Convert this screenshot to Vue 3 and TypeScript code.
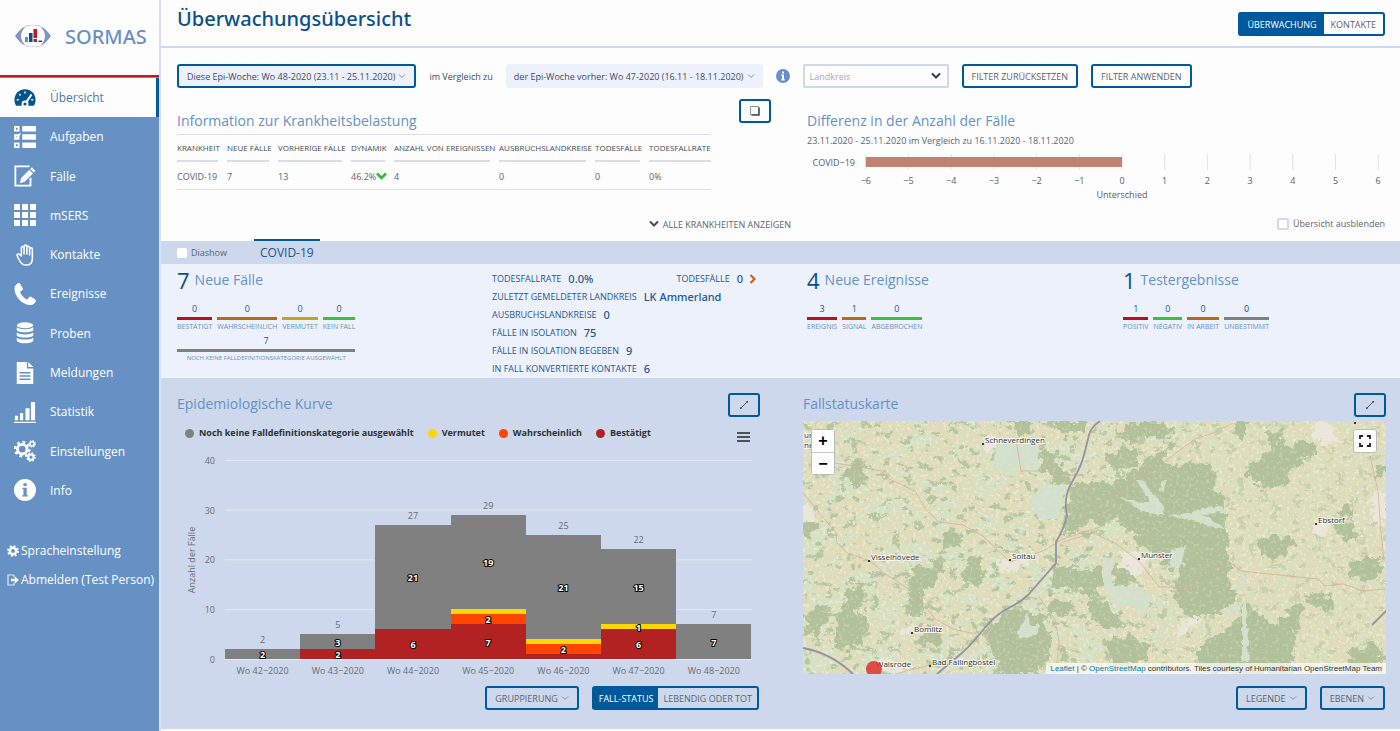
<script setup lang="ts">
import { ref } from 'vue'

interface NavItem { label: string; icon: string }
interface Count { value: number; label: string; tone: string; wide?: boolean }
interface Week { name: string; red: number; orange: number; yellow: number; grey: number }
interface Segment { key: string; x: number; y: number; h: number; fill: string; text: string }
interface Place { name: string; x: number; y: number }

const navItems: NavItem[] = [
  { label: 'Übersicht', icon: 'gauge' },
  { label: 'Aufgaben', icon: 'tasks' },
  { label: 'Fälle', icon: 'edit' },
  { label: 'mSERS', icon: 'grid' },
  { label: 'Kontakte', icon: 'hand' },
  { label: 'Ereignisse', icon: 'phone' },
  { label: 'Proben', icon: 'database' },
  { label: 'Meldungen', icon: 'file' },
  { label: 'Statistik', icon: 'bars' },
  { label: 'Einstellungen', icon: 'cogs' },
  { label: 'Info', icon: 'info' },
]
const active = ref('Übersicht')
const slideshow = ref(false)
const hideOverview = ref(false)

const columns = ['Krankheit', 'Neue Fälle', 'Vorherige Fälle', 'Dynamik', 'Anzahl von Ereignissen', 'Ausbruchslandkreise', 'Todesfälle', 'Todesfallrate']

const caseCounts: Count[] = [
  { value: 0, label: 'Bestätigt', tone: 'red' },
  { value: 0, label: 'Wahrscheinlich', tone: 'orange' },
  { value: 0, label: 'Vermutet', tone: 'gold' },
  { value: 0, label: 'Kein Fall', tone: 'green' },
  { value: 7, label: 'Noch keine Falldefinitionskategorie ausgewählt', tone: 'grey', wide: true },
]
const eventCounts: Count[] = [
  { value: 3, label: 'Ereignis', tone: 'red' },
  { value: 1, label: 'Signal', tone: 'orange' },
  { value: 0, label: 'Abgebrochen', tone: 'green' },
]
const testCounts: Count[] = [
  { value: 1, label: 'Positiv', tone: 'red' },
  { value: 0, label: 'Negativ', tone: 'green' },
  { value: 0, label: 'In Arbeit', tone: 'orange' },
  { value: 0, label: 'Unbestimmt', tone: 'grey' },
]
const details = [
  { label: 'Zuletzt gemeldeter Landkreis', value: 'LK Ammerland' },
  { label: 'Ausbruchslandkreise', value: '0' },
  { label: 'Fälle in Isolation', value: '75' },
  { label: 'Fälle in Isolation begeben', value: '9' },
  { label: 'In Fall konvertierte Kontakte', value: '6' },
]

const diffTicks = [-6, -5, -4, -3, -2, -1, 0, 1, 2, 3, 4, 5, 6]
const diffX = (v: number) => 315 + v * 42.7
const diffLabel = (v: number) => (v < 0 ? '−' + Math.abs(v) : String(v))

const legend = [
  { label: 'Noch keine Falldefinitionskategorie ausgewählt', tone: 'grey' },
  { label: 'Vermutet', tone: 'yellow' },
  { label: 'Wahrscheinlich', tone: 'vermilion' },
  { label: 'Bestätigt', tone: 'brick' },
]
const weeks: Week[] = [
  { name: 'Wo 42−2020', red: 0, orange: 0, yellow: 0, grey: 2 },
  { name: 'Wo 43−2020', red: 2, orange: 0, yellow: 0, grey: 3 },
  { name: 'Wo 44−2020', red: 6, orange: 0, yellow: 0, grey: 21 },
  { name: 'Wo 45−2020', red: 7, orange: 2, yellow: 1, grey: 19 },
  { name: 'Wo 46−2020', red: 1, orange: 2, yellow: 1, grey: 21 },
  { name: 'Wo 47−2020', red: 6, orange: 0, yellow: 1, grey: 15 },
  { name: 'Wo 48−2020', red: 0, orange: 0, yellow: 0, grey: 7 },
]
const unit = 4.98
const base = 214
const barWidth = 75.2
const barX = (i: number) => 48 + i * barWidth
const total = (w: Week) => w.red + w.orange + w.yellow + w.grey
const segments: Segment[] = weeks.flatMap((w, i) => {
  let sum = 0
  const parts: [number, string][] = [[w.red, '#b22222'], [w.orange, '#ff4500'], [w.yellow, '#ffd700'], [w.grey, '#808080']]
  return parts.filter(([n]) => n > 0).map(([n, fill]) => {
    sum += n
    const visible = n > 1 || (n === 1 && w.orange === 0)
    return { key: w.name + fill, x: barX(i), y: base - sum * unit, h: n * unit, fill, text: visible ? String(n) : '' }
  })
})

const places: Place[] = [
  { name: 'Schneverdingen', x: 180, y: 23 },
  { name: 'Visselhövede', x: 66, y: 140 },
  { name: 'Soltau', x: 207, y: 139 },
  { name: 'Munster', x: 336, y: 138 },
  { name: 'Ebstorf', x: 513, y: 103 },
  { name: 'Bomlitz', x: 109, y: 212 },
  { name: 'Bad Fallingbostel', x: 127, y: 245 },
]
const forests = [
  '268,66 290,60 306,62 322,56 345,38 368,22 362,45 392,42 414,50 410,62 418,72 420,88 422,105 427,118 424,130 400,136 378,142 366,152 356,140 345,130 330,118 322,105 310,96 300,104 290,100 262,112 255,118 264,94',
  '310,14 322,5 355,0 372,12 360,20 345,12 325,22',
  '300,38 318,26 340,28 334,42 312,50',
  '430,2 444,0 446,14 434,16',
  '462,8 480,12 475,25 510,22 516,30 498,42 488,48 486,60 462,68 445,55 448,42 462,34 468,22',
  '384,134 424,126 428,150 425,160 434,175 418,192 395,196 378,188 366,170 372,166',
  '396,228 412,214 436,196 440,182 455,195 470,205 490,184 500,182 486,253 396,253',
  '376,176 392,180 396,196 380,196',
  '527,104 550,98 552,120 538,116',
  '547,141 570,134 582,144 577,157 560,161 547,152',
  '545,230 570,222 582,235 570,245 548,248',
  '454,120 480,114 494,120 487,134 460,137',
  '505,172 530,175 525,190 508,188',
  '532,90 540,84 552,88 548,98',
  '220,186 240,196 247,210 244,240 230,253 200,253 187,231 180,211 200,192',
  '253,144 275,150 300,146 300,160 292,175 275,170 260,165 245,168',
  '247,174 270,182 264,196 244,190',
  '310,142 335,150 334,164 314,165',
  '288,176 306,184 320,200 304,206 284,196',
  '302,222 325,214 350,226 340,240 312,246',
  '44,170 60,161 64,180 52,190 66,205 60,224 30,228 34,197',
  '4,190 22,184 28,200 14,212 0,214',
  '110,151 134,138 144,150 134,160 120,172 120,194 104,191 106,170',
  '150,108 162,112 156,124 140,130 134,120',
  '166,136 180,140 184,152 170,166 160,156',
  '238,24 252,34 270,57 262,62 237,50',
  '247,0 287,0 277,11 258,14',
  '205,0 226,0 228,10 216,14',
  '45,42 58,38 66,60 50,66 42,56',
  '0,100 17,104 7,117 0,114',
  '118,206 138,208 134,226 116,222',
  '572,46 583,46 583,56 572,56',
]
const heaths = [
  '194,18 237,20 234,48 190,50',
  '240,64 260,64 258,98 237,98 227,78',
  '300,134 314,140 306,150 310,164 340,167 347,177 342,197 330,184 313,184 300,164',
  '334,59 339,59 362,87 360,94 343,92 317,77 337,81 347,81',
  '358,60 363,60 362,72 357,70',
  '397,87 419,85 420,92 400,93 424,109 410,107 394,101 364,94 387,92',
  '439,182 443,182 446,241 439,241',
  '437,148 442,148 441,168 437,166',
  '418,190 438,182 438,188 420,194',
  '225,191 227,204 239,204 234,214 217,217 214,211',
  '368,128 382,126 378,145 366,148',
]
const towns = ['180,16 190,14 196,28 184,34', '192,142 222,132 230,140 214,150 196,150', '318,132 340,128 344,148 332,154 318,144', '508,102 520,98 526,110 512,114', '96,206 112,204 114,212 98,214', '74,238 104,242 112,250 78,250', '511,0 526,4 536,20 520,24 510,16', '567,78 582,66 582,104 572,100', '0,82 8,86 16,98 6,104 0,100', '378,200 400,194 392,206 374,216']
const roads = [
  'M0 72 15 90 33 112 34 122 45 132 67 140 84 154 104 167 120 182 132 198 150 208 168 212 185 212',
  'M31 42 58 46 78 50 86 58 112 70 124 90 136 101 160 104 180 115 207 141 240 130 260 118 300 105',
  'M213 18 218 50 240 50 265 54 282 54',
  'M287 90 330 60 362 40 392 18 410 12 430 2',
  'M257 122 290 112 312 122 336 140 356 166 388 166 410 148 425 140 438 150 515 158 522 165 540 163 560 170 582 168',
  'M567 35 575 70 578 110 581 140',
  'M236 176 252 198 256 220 254 242',
  'M92 253 120 246 150 236',
]
</script>

<template>
  <div class="app">
    <aside class="sidebar">
      <div class="brand">
        <svg class="logo" viewBox="0 0 36 22" aria-hidden="true">
          <path d="M11 1C6 3 3 7 0 11c3 4 6 8 11 10-3-3-5-6-5-10s2-7 5-10zM25 1c5 2 8 6 11 10-3 4-6 8-11 10 3-3 5-6 5-10s-2-7-5-10z" fill="#7f97c6" />
          <path d="M11 1c4-1.300 10-1.300 14 0M11 21c4 1.300 10 1.300 14 0" fill="none" stroke="#c3cee4" stroke-width="1.200" />
          <path d="M10 12h3v5h-3z" fill="#6f8cc0" /><path d="M14 8h3.500v9H14z" fill="#0a4f8c" />
          <path d="M18.500 4h3.500v9h-3.500zM18.500 14h3.500v3h-3.500z" fill="#c4161c" />
          <path d="M23.500 15.500H27V17h-3.500z" fill="#0a4f8c" />
        </svg>
        <span>SORMAS</span>
      </div>
      <nav class="nav">
        <a v-for="item in navItems" :key="item.label" href="#" :class="{ selected: item.label === active }" @click.prevent="active = item.label">
          <svg class="nav-icon" viewBox="0 0 24 24" fill="currentColor" aria-hidden="true">
            <template v-if="item.icon === 'gauge'">
              <path d="M12 2.500C5.500 2.500.5 7.500.5 14c0 2.500.7 4.800 1.900 6.500h19.200c1.200-1.700 1.900-4 1.900-6.500 0-6.500-5-11.500-11.500-11.500z" />
              <path d="m12.500 18 6-9" stroke="#fff" stroke-width="2.400" stroke-linecap="round" />
              <circle cx="12" cy="18.500" r="3.800" fill="#fff" /><circle cx="12" cy="18.500" r="1.700" />
              <path d="M12 4.800v2.200M3 14h2.200M18.800 14H21M5.700 7.700l1.500 1.500" stroke="#fff" stroke-width="1.600" />
            </template>
            <template v-else-if="item.icon === 'tasks'">
              <path fill-rule="evenodd" d="M0 0h6v6H0zM2 2v2h2V2zM0 9h6v6H0zM2 11v2h2v-2zM0 18h6v6H0zM2 20v2h2v-2z" />
              <path d="M9 0h15v6H9zM9 9h15v6H9zM9 18h15v6H9z" /><path d="m1 11 2 2 4-5" fill="none" stroke="#fff" stroke-width="1.500" />
            </template>
            <template v-else-if="item.icon === 'edit'">
              <path d="M17 1.500H1.500v21H18V14" fill="none" stroke="currentColor" stroke-width="2" />
              <path d="m19.500 2.500 4 4-1.800 1.800-4-4zM16.700 5.300l4 4-9 9-5.200 1.500 1.300-5.500z" />
            </template>
            <path v-else-if="item.icon === 'grid'" d="M0 0h6.500v6.500H0zM8.800 0h6.500v6.500H8.800zM17.500 0H24v6.500h-6.500zM0 8.800h6.500v6.500H0zM8.800 8.800h6.500v6.500H8.800zM17.500 8.800H24v6.500h-6.500zM0 17.500h6.500V24H0zM8.800 17.500h6.500V24H8.800zM17.500 17.500H24V24h-6.500z" />
            <path v-else-if="item.icon === 'hand'" fill="none" stroke="currentColor" stroke-width="1.700" stroke-linejoin="round" stroke-linecap="round" d="M8 13V4.200c0-2 3-2 3 0V11 2.600c0-2 3-2 3 0V11 4c0-2 3-2 3 0v8-6.500c0-2 3-2 3 0V16c0 4-2 7-7 7-4 0-5.500-2-7-5l-2.600-5.200c-.6-1.800 1.600-2.600 2.600-1.300z" />
            <path v-else-if="item.icon === 'phone'" d="M5 0C3 .8.500 3 .5 6c0 9 8.500 18 17.500 18 3 0 5.200-2.500 5.800-4.500.2-.7 0-1-.5-1.400L18.500 15c-.7-.5-1.300-.3-1.800.3l-1.800 2.200c-.4.5-1 .5-1.500.2-2.800-1.700-5-4-6.500-7-.3-.5-.2-1 .3-1.400L9.300 7.500c.6-.5.700-1 .3-1.700L6.500.6C6.100 0 5.700-.2 5 0z" />
            <g v-else-if="item.icon === 'database'">
              <ellipse cx="12" cy="3.500" rx="9" ry="3.200" /><path d="M3 5.800c3 2.700 15 2.700 18 0V9c-2 3-16 3-18 0zM3 11.500c3 2.700 15 2.700 18 0v3.200c-2 3-16 3-18 0zM3 17.200c3 2.700 15 2.700 18 0v3.300c-2 3.700-16 3.700-18 0z" />
            </g>
            <path v-else-if="item.icon === 'file'" fill-rule="evenodd" d="M3 0h11v7h7v17H3zM15.500 0 21 5.500h-5.500zM6 11v1.500h12V11zM6 14.500V16h12v-1.500zM6 18v1.500h12V18z" />
            <path v-else-if="item.icon === 'bars'" d="M1 16h3.500v5H1zM6.500 13H10v8H6.500zM12.500 8H17v13h-4.500zM18.500 1H23v20h-4.500zM0 22.500h24V24H0z" />
            <g v-else-if="item.icon === 'cogs'" fill="none" stroke="currentColor">
              <circle cx="9" cy="10" r="5.200" stroke-width="3.200" /><circle cx="9" cy="10" r="7.800" stroke-width="2.600" stroke-dasharray="3.060" />
              <circle cx="19.800" cy="4.200" r="2.300" stroke-width="1.800" /><circle cx="19.800" cy="4.200" r="3.500" stroke-width="1.200" stroke-dasharray="1.370" />
              <circle cx="18.500" cy="18.700" r="2.900" stroke-width="2.200" /><circle cx="18.500" cy="18.700" r="4.500" stroke-width="1.600" stroke-dasharray="1.770" />
            </g>
            <path v-else fill-rule="evenodd" d="M12 0a12 12 0 1 1 0 24 12 12 0 0 1 0-24zM10.300 4.500v3h3.600v-3zM9 9.500v1.300h1.300v7H9V19h6.300v-1.200h-1.400V9.500z" />
          </svg>
          <span>{{ item.label }}</span>
        </a>
      </nav>
      <div class="account">
        <a href="#">
          <svg viewBox="0 0 12 12" aria-hidden="true"><g fill="none" stroke="#fff"><circle cx="6" cy="6" r="3.200" stroke-width="2.400" /><circle cx="6" cy="6" r="5" stroke-width="1.800" stroke-dasharray="1.960" /></g></svg>
          Spracheinstellung
        </a>
        <a href="#">
          <svg viewBox="0 0 12 12" aria-hidden="true"><path d="M7 1H1v10h6V8.500M7 1v2.500" fill="none" stroke="#dfe9f6" stroke-width="1.200" /><path d="M4 4.800h4V2.500L12 6 8 9.500V7.200H4z" fill="#fff" /></svg>
          Abmelden (Test Person)
        </a>
      </div>
    </aside>

    <main class="main">
      <header class="header">
        <h1>Überwachungsübersicht</h1>
        <div class="switch roomy">
          <button class="on" type="button">Überwachung</button><button type="button">Kontakte</button>
        </div>
      </header>

      <section class="overview">
        <div class="filters">
          <button class="btn week framed" type="button">Diese Epi-Woche: Wo 48-2020 (23.11 - 25.11.2020)<svg class="caret" viewBox="0 0 8 8"><path d="m1 2.500 3 3 3-3" /></svg></button>
          <span class="compare">im Vergleich zu</span>
          <button class="btn week" type="button">der Epi-Woche vorher: Wo 47-2020 (16.11 - 18.11.2020)<svg class="caret" viewBox="0 0 8 8"><path d="m1 2.500 3 3 3-3" /></svg></button>
          <svg class="hint" viewBox="0 0 14 14" aria-label="Info"><circle cx="7" cy="7" r="7" fill="#6691c4" /><path d="M6 2.500h2v2H6zM5.200 5.500H8v4.700h.8v1.200H5.200v-1.200H6V6.700h-.8z" fill="#fff" /></svg>
          <div class="region">
            <select aria-label="Landkreis"><option>Landkreis</option></select>
            <svg viewBox="0 0 10 8" aria-hidden="true"><path d="m1 1.500 4 4 4-4" /></svg>
          </div>
          <button class="btn framed" type="button">Filter zurücksetzen</button>
          <button class="btn framed" type="button">Filter anwenden</button>
        </div>

        <div class="burden">
          <div class="burden-left">
            <div class="burden-head">
              <h2>Information zur Krankheitsbelastung</h2>
              <button class="btn framed square" type="button" aria-label="Kachelansicht"><svg viewBox="0 0 10 10" aria-hidden="true"><path d="M.5.500h8v8h-8z" fill="#fff" stroke="#8a93a3" /><path d="M9 1.500V9H1.500" fill="none" stroke="#464f5e" stroke-width="1.600" /></svg></button>
            </div>
            <table>
              <colgroup><col v-for="(c, i) in columns" :key="c" :class="'c' + i" /></colgroup>
              <thead><tr><th v-for="c in columns" :key="c" scope="col"><span>{{ c }}</span></th></tr></thead>
              <tbody>
                <tr>
                  <td>COVID-19</td><td>7</td><td>13</td>
                  <td class="dyn">46.2%<svg viewBox="0 0 11 8" aria-hidden="true"><path d="m1 1.500 4.500 4.500L10 1.500" fill="none" stroke="#2fbf36" stroke-width="2.600" /></svg></td>
                  <td>4</td><td>0</td><td>0</td><td>0%</td>
                </tr>
              </tbody>
            </table>
            <button class="plain show-all" type="button"><svg viewBox="0 0 10 8" aria-hidden="true"><path d="m1 1.500 4 4 4-4" /></svg>Alle Krankheiten anzeigen</button>
          </div>
          <div class="burden-right">
            <h2>Differenz in der Anzahl der Fälle</h2>
            <p>23.11.2020 - 25.11.2020 im Vergleich zu 16.11.2020 - 18.11.2020</p>
            <svg class="diff" viewBox="0 0 578 52" role="img" aria-label="Differenz in der Anzahl der Fälle">
              <path v-for="t in diffTicks" :key="t" :d="`M${diffX(t)} 2v16`" stroke="#e2e2e2" />
              <rect :x="diffX(-6)" y="5" :width="diffX(0) - diffX(-6)" height="10" fill="#c08272" />
              <text x="48" y="14" text-anchor="end">COVID−19</text>
              <text v-for="t in diffTicks" :key="'l' + t" :x="diffX(t)" y="32" text-anchor="middle">{{ diffLabel(t) }}</text>
              <text :x="diffX(0)" y="46" text-anchor="middle">Unterschied</text>
            </svg>
            <label class="hide"><input v-model="hideOverview" type="checkbox" />Übersicht ausblenden</label>
          </div>
        </div>
      </section>

      <div class="tabs">
        <label><input v-model="slideshow" type="checkbox" />Diashow</label>
        <button class="tab" type="button">COVID-19</button>
      </div>

      <section class="stats">
        <div>
          <h3><b>7</b>Neue Fälle</h3>
          <div class="counts four">
            <div v-for="c in caseCounts" :key="c.label" class="count" :class="[c.tone, { wide: c.wide }]"><span>{{ c.value }}</span><i></i><small>{{ c.label }}</small></div>
          </div>
        </div>
        <div class="details">
          <div class="pair"><div><span>Todesfallrate</span><b>0.0%</b></div><div><span>Todesfälle</span><b>0</b><svg viewBox="0 0 8 10" aria-hidden="true"><path d="m1.500 1 4 4-4 4" fill="none" stroke="#c0661a" stroke-width="2.200" /></svg></div></div>
          <div v-for="d in details" :key="d.label"><span>{{ d.label }}</span><b>{{ d.value }}</b></div>
        </div>
        <div>
          <h3><b>4</b>Neue Ereignisse</h3>
          <div class="counts">
            <div v-for="c in eventCounts" :key="c.label" class="count" :class="c.tone"><span>{{ c.value }}</span><i></i><small>{{ c.label }}</small></div>
          </div>
        </div>
        <div>
          <h3><b>1</b>Testergebnisse</h3>
          <div class="counts">
            <div v-for="c in testCounts" :key="c.label" class="count" :class="c.tone"><span>{{ c.value }}</span><i></i><small>{{ c.label }}</small></div>
          </div>
        </div>
      </section>

      <section class="panels">
        <div class="panel">
          <div class="panel-head">
            <h2>Epidemiologische Kurve</h2>
            <button class="btn framed clear square" type="button" aria-label="Vergrößern"><svg viewBox="0 0 10 10" aria-hidden="true"><path d="m2 8 6-6" stroke="#4a5260" /><path d="M1 9V6.800L3.200 9zM9 1v2.200L6.800 1z" fill="#4a5260" /></svg></button>
          </div>
          <div class="legend">
            <span v-for="l in legend" :key="l.label" :class="l.tone"><i></i>{{ l.label }}</span>
            <button class="plain menu" type="button" aria-label="Menü"><i></i><i></i><i></i></button>
          </div>
          <svg class="curve" viewBox="0 0 583 238" role="img" aria-label="Epidemiologische Kurve">
            <g v-for="t in [0, 10, 20, 30, 40]" :key="t">
              <path :d="`M48 ${base - t * unit + 0.5}H575`" stroke="#e6e9ee" />
              <text x="38" :y="base - t * unit + 4" text-anchor="end">{{ t }}</text>
            </g>
            <text transform="translate(18 115) rotate(-90)" text-anchor="middle">Anzahl der Fälle</text>
            <rect v-for="s in segments" :key="s.key" :x="s.x" :y="s.y" :width="barWidth" :height="s.h" :fill="s.fill" shape-rendering="crispEdges" />
            <text v-for="s in segments" :key="'t' + s.key" class="inner" :x="s.x + barWidth / 2" :y="s.y + s.h / 2 + 4" text-anchor="middle">{{ s.text }}</text>
            <g v-for="(w, i) in weeks" :key="w.name">
              <text :x="barX(i) + barWidth / 2" :y="base - total(w) * unit - 6" text-anchor="middle">{{ total(w) }}</text>
              <text :x="barX(i) + barWidth / 2" y="229" text-anchor="middle">{{ w.name }}</text>
            </g>
          </svg>
          <div class="actions left">
            <button class="btn framed clear" type="button">Gruppierung<svg class="caret" viewBox="0 0 8 8"><path d="m1 2.500 3 3 3-3" /></svg></button>
            <div class="switch clear"><button class="on" type="button">Fall-Status</button><button type="button">Lebendig oder tot</button></div>
          </div>
        </div>

        <div class="panel">
          <div class="panel-head">
            <h2>Fallstatuskarte</h2>
            <button class="btn framed clear square" type="button" aria-label="Vergrößern"><svg viewBox="0 0 10 10" aria-hidden="true"><path d="m2 8 6-6" stroke="#4a5260" /><path d="M1 9V6.800L3.200 9zM9 1v2.200L6.800 1z" fill="#4a5260" /></svg></button>
          </div>
          <div class="map">
            <svg viewBox="0 0 583 253" preserveAspectRatio="xMidYMid slice" role="img" aria-label="Karte">
              <defs>
                <filter id="rough" x="-5%" y="-5%" width="110%" height="110%"><feTurbulence type="fractalNoise" baseFrequency="0.12" numOctaves="4" seed="4" /><feDisplacementMap in="SourceGraphic" scale="18" xChannelSelector="R" yChannelSelector="G" /></filter>
                <filter id="edge" x="-5%" y="-5%" width="110%" height="110%"><feTurbulence type="fractalNoise" baseFrequency="0.15" numOctaves="2" seed="9" /><feDisplacementMap in="SourceGraphic" scale="6" xChannelSelector="R" yChannelSelector="G" /></filter>
                <filter id="woods" x="0" y="0" width="100%" height="100%" color-interpolation-filters="sRGB"><feTurbulence type="fractalNoise" baseFrequency="0.09 0.12" numOctaves="4" seed="12" /><feColorMatrix values="0 0 0 0 .71  0 0 0 0 .78  0 0 0 0 .63  12 0 0 0 -7.100" /></filter>
                <filter id="meadow" x="0" y="0" width="100%" height="100%" color-interpolation-filters="sRGB"><feTurbulence type="fractalNoise" baseFrequency="0.04" numOctaves="6" seed="31" /><feColorMatrix values="0 0 0 0 .84  0 0 0 0 .88  0 0 0 0 .76  0 7 0 0 -3.300" /></filter>
                <filter id="specks" x="0" y="0" width="100%" height="100%" color-interpolation-filters="sRGB"><feTurbulence type="fractalNoise" baseFrequency="0.3" numOctaves="3" seed="7" /><feColorMatrix values="0 0 0 0 .93  0 0 0 0 .92  0 0 0 0 .85  0 0 9 0 -5.200" /></filter>
                <linearGradient id="fade"><stop offset="0" stop-color="#fff" /><stop offset="0.5" stop-color="#fff" /><stop offset="0.75" stop-color="#888" /><stop offset="1" stop-color="#888" /></linearGradient>
                <mask id="west"><rect width="583" height="253" fill="url(#fade)" /></mask>
              </defs>
              <rect width="583" height="253" fill="#dfdcb9" />
              <g mask="url(#west)">
                <rect width="583" height="253" filter="url(#meadow)" />
                <rect width="583" height="253" filter="url(#woods)" />
              </g>
              <rect width="583" height="253" filter="url(#specks)" opacity=".7" />
              <g fill="#b1c29b" filter="url(#rough)"><polygon v-for="p in forests" :key="p" :points="p" /></g>
              <g fill="#ebe6da" filter="url(#rough)"><polygon v-for="p in towns" :key="p" :points="p" /></g>
              <g fill="#d3e0cb" filter="url(#edge)"><polygon v-for="p in heaths" :key="p" :points="p" /></g>
              <rect width="583" height="253" filter="url(#specks)" opacity=".25" />
              <path v-for="r in roads" :key="r" :d="r" fill="none" stroke="#dda794" stroke-linejoin="round" opacity=".7" />
              <g fill="none" stroke="#9493a6" stroke-width="1.800">
                <path d="M297 0Q288 6 286 14T281 34 269 61 264 94Q262 106 253 121V142L225 174Q216 182 204 188T180 209 160 231 134 253" />
                <path d="M0 227Q28 232 50 253M583 190 569 204" />
              </g>
              <g class="places">
                <text x="1" y="17">ur</text><text x="1" y="27">ne</text>
                <text x="73" y="246">Walsrode</text>
                <g v-for="p in places" :key="p.name"><circle :cx="p.x" :cy="p.y" r="1" /><text :x="p.x + 2" :y="p.y - 1">{{ p.name }}</text></g>
                <circle cx="552" cy="2" r="1" />
              </g>
              <circle cx="71" cy="248" r="8" fill="#e0332c" opacity=".85" />
            </svg>
            <div class="zoom"><button type="button" aria-label="Vergrößern">+</button><button type="button" aria-label="Verkleinern">−</button></div>
            <button class="full" type="button" aria-label="Vollbild"><svg viewBox="0 0 12 12"><path d="M1 4V1h3M8 1h3v3M11 8v3H8M4 11H1V8" fill="none" stroke="#222" stroke-width="1.800" /></svg></button>
            <div class="credit"><a href="#">Leaflet</a> | © <a href="#">OpenStreetMap</a> contributors. Tiles courtesy of Humanitarian OpenStreetMap Team</div>
          </div>
          <div class="actions">
            <button class="btn framed clear" type="button">Legende<svg class="caret" viewBox="0 0 8 8"><path d="m1 2.500 3 3 3-3" /></svg></button>
            <button class="btn framed clear" type="button">Ebenen<svg class="caret" viewBox="0 0 8 8"><path d="m1 2.500 3 3 3-3" /></svg></button>
          </div>
        </div>
      </section>
    </main>
  </div>
</template>

<style>
body { margin: 0; background: #fdfdfe; }
</style>

<style scoped>
* { box-sizing: border-box; }
.app { display: flex; min-height: 100vh; font-family: "Open Sans", "Noto Sans", sans-serif; font-size: 9px; color: #5c6470; background: #fdfdfe; }
button, select, input { font: inherit; color: inherit; margin: 0; }
button { cursor: pointer; }
h1, h2, h3, p { margin: 0; font-weight: 400; }
a { color: inherit; text-decoration: none; }
svg { display: block; flex: none; }

.sidebar { flex: none; width: 161px; background: #6691c4; border-right: 2px solid #d7e0f3; color: #fff; }
.brand { display: flex; align-items: center; gap: 14px; height: 77px; padding: 0 0 3px 15px; background: #fdfdfe; border-bottom: 2px solid #c01a1f; color: #6b8fc2; font-family: "Noto Sans", sans-serif; font-size: 20px; font-weight: 500; }
.logo { width: 36px; height: 22px; }
.nav { display: grid; grid-auto-rows: 1fr; min-height: 433px; padding-top: 1px; }
.nav a { display: flex; align-items: center; gap: 14px; padding-left: 14px; font-size: 12px; }
.nav a.selected { background: #fdfdfe; color: #4a7aa8; border-right: 3px solid #005a9c; }
.nav-icon { width: 22px; height: 22px; }
.selected .nav-icon { color: #00558f; }
.account { display: grid; gap: 9px; padding: 31px 0 0 7px; font-size: 12px; line-height: 20px; }
.account a { display: flex; align-items: center; gap: 2px; white-space: nowrap; }
.account svg { width: 12px; height: 12px; }

.main { flex: 1; min-width: 0; }
.header { display: flex; justify-content: space-between; align-items: flex-start; height: 48px; padding: 0 15px 0 16px; border-bottom: 2px solid #cdd8ec; }
h1 { font-family: "Noto Sans", sans-serif; font-size: 20px; line-height: 38px; font-weight: 500; color: #0b5088; }
h2 { font-size: 14px; line-height: 20px; font-weight: 500; color: #6691c4; }
.switch { display: flex; height: 24px; border: 2px solid #00599a; border-radius: 3px; background: #fdfdfe; }
.header .switch { margin-top: 12px; }
.switch button { border: 0; background: none; padding: 0 5px; text-transform: uppercase; white-space: nowrap; }
.switch.roomy button { padding: 0 7px; }
.switch .on { background: #00599a; color: #fff; }
.switch.clear { background: none; }

.overview { padding: 16px 15px 0 16px; height: 193px; }
.filters { display: flex; align-items: center; }
.btn { display: inline-flex; align-items: center; justify-content: center; height: 24px; padding: 0 8px; border: 2px solid transparent; border-radius: 3px; background: #fdfdfe; text-transform: uppercase; white-space: nowrap; }
.btn.framed { border-color: #00599a; }
.btn.clear { background: none; }
.btn.week { background: #edf1fc; text-transform: none; color: #434c5a; padding: 0 6px; font-weight: 500; }
.btn.week.framed { padding: 0 8px; }
.btn.square { width: 32px; padding: 0; }
.square svg { width: 10px; height: 10px; }
.caret { width: 8px; height: 8px; margin-left: 3px; fill: none; stroke: #8290a6; }
.compare { margin: 0 13px; color: #434c5a; }
.hint { width: 14px; height: 14px; margin: 0 13px; }
.region { position: relative; width: 146px; margin-right: 13px; }
.region select { width: 100%; height: 24px; padding: 0 5px; border: 2px solid #cdd8e8; border-radius: 2px; background: #fdfdfe; color: #a5acb8; appearance: none; }
.region svg { position: absolute; right: 8px; top: 8px; width: 10px; height: 8px; pointer-events: none; fill: none; stroke: #333c49; stroke-width: 2; }
.framed + .framed { margin-left: 13px; }

.burden { display: grid; grid-template-columns: 630fr 578fr; }
.burden-head { display: flex; justify-content: space-between; align-items: flex-start; height: 46px; padding: 11px 36px 0 0; }
.burden-head h2 { padding-top: 12px; }
.burden-head .btn { margin-right: 0; }
table { width: 534px; table-layout: fixed; border-collapse: collapse; border: solid #dbdfe5; border-width: 1px 0; }
.c0 { width: 50px; } .c1 { width: 51px; } .c2 { width: 73px; } .c3 { width: 43px; } .c4 { width: 105px; } .c5 { width: 96px; } .c6 { width: 54px; }
th { padding: 0 9px 0 0; font-size: 8px; font-weight: 500; text-align: left; text-transform: uppercase; color: #434c5a; white-space: nowrap; }
th:last-child { padding-right: 0; }
th span { display: block; height: 27px; line-height: 26px; border-bottom: 2px solid #dbdfe5; }
td { height: 27px; padding: 3px 0 0; white-space: nowrap; }
.dyn svg { display: inline-block; width: 11px; height: 8px; }
.plain { display: flex; align-items: center; border: 0; padding: 0; background: none; }
.show-all { gap: 4px; margin: 28px 16px 0 auto; text-transform: uppercase; }
.show-all svg { width: 10px; height: 8px; fill: none; stroke: #434c5a; stroke-width: 2; }
.burden-right h2 { margin-top: 23px; }
.burden-right p { line-height: 20px; }
.diff { width: 100%; margin-top: 1px; }
.hide { display: flex; align-items: center; justify-content: flex-end; gap: 4px; margin-top: 13px; line-height: 14px; }
input[type="checkbox"] { appearance: none; width: 12px; height: 12px; border: 2px solid #d3dbea; border-radius: 2px; background: #fff; }
text { font-size: 9px; fill: #5c6066; }

.tabs { display: flex; align-items: center; gap: 27px; height: 23px; padding-left: 16px; background: #cdd8ec; }
.tabs label { display: flex; align-items: center; gap: 4px; }
.tabs input { width: 10px; height: 10px; border: 0; }
.tab { align-self: stretch; margin-top: -2px; padding: 0 6px; border: 0; border-top: 2px solid #00599a; background: none; color: #16568f; font-size: 12px; font-weight: 500; }

.stats { display: grid; grid-template-columns: 315fr 315fr 316fr 277fr; height: 114px; padding: 6px 0 0 16px; background: #edf1fc; }
h3 { display: flex; align-items: center; gap: 5px; height: 20px; font-size: 14px; line-height: 20px; font-weight: 500; color: #6691c4; }
h3 b { font-size: 22px; font-weight: 500; color: #0b5088; }
.counts { display: grid; grid-auto-flow: column; grid-auto-columns: max-content; gap: 1px 5px; margin-top: 12px; }
.counts.four { grid-auto-flow: row; grid-template-columns: repeat(4, max-content); }
.count { display: grid; text-align: center; }
.count span { line-height: 14px; color: #1c5a8c; }
.count i { height: 3px; margin-top: 1px; background: var(--tone); }
.count small { font-size: 7px; line-height: 13px; text-transform: uppercase; white-space: nowrap; color: #6a90b8; }
.wide { grid-column: 1 / -1; }
.wide small { font-size: 6px; }
.red { --tone: #b8101c; } .orange { --tone: #b8691c; } .gold { --tone: #bfa522; } .green { --tone: #37c23b; } .grey { --tone: #808080; }
.yellow { --tone: #ffd700; } .vermilion { --tone: #ff4500; } .brick { --tone: #b22222; }
.details { line-height: 18px; color: #1c5a8c; padding-right: 50px; white-space: nowrap; }
.details div { display: flex; align-items: center; height: 18px; }
.details span { text-transform: uppercase; margin-right: 7px; font-weight: 500; }
.details b { font-size: 11px; font-weight: 500; font-family: "Noto Sans", sans-serif; }
.details .pair { justify-content: space-between; }
.details svg { width: 8px; height: 10px; margin-left: 6px; }

.panels { display: grid; grid-template-columns: 1fr 1fr; gap: 43px; padding: 15px 14px 19px 16px; background: #cdd8ec; }
.panel { min-width: 0; display: flex; flex-direction: column; }
.panel-head { display: flex; justify-content: space-between; height: 24px; }
.panel-head h2 { line-height: 22px; }
.legend { display: flex; gap: 14px; height: 28px; padding: 9px 10px 0 8px; font-weight: 700; line-height: 14px; color: #2c3138; white-space: nowrap; }
.legend span { display: flex; align-items: center; gap: 5px; height: 14px; }
.legend span i { width: 9px; height: 9px; border-radius: 50%; background: var(--tone); }
.menu { flex-direction: column; gap: 2px; width: 14px; margin: 6px 0 0 auto; }
.menu i { width: 13px; height: 2px; background: #4c535e; }
.curve { width: 100%; }
.curve text { fill: #666c76; }
.curve .inner { fill: #fff; font-weight: 700; stroke: #000; stroke-width: 2; paint-order: stroke; stroke-linejoin: round; }
.actions { display: flex; justify-content: flex-end; gap: 13px; margin-top: 12px; padding-right: 1px; }
.actions.left { margin-top: 3px; }
.actions .framed + .framed { margin-left: 0; }
.map { position: relative; margin-top: 4px; height: 253px; overflow: hidden; }
.map > svg { width: 100%; height: 100%; }
.places text { font-size: 8px; font-weight: 500; fill: #333; stroke: #f6f5ec; stroke-width: 2; paint-order: stroke; }
.zoom { position: absolute; left: 8px; top: 8px; display: grid; border-radius: 3px; border: 1px solid #bbb; }
.zoom button { width: 22px; height: 22px; padding: 0; border: 0; background: #fff; color: #000; font: 700 16px/20px "Liberation Sans", sans-serif; }
.zoom button + button { border-top: 1px solid #ccc; }
.full { position: absolute; right: 9px; top: 8px; width: 24px; height: 24px; display: grid; place-items: center; padding: 0; border: 1px solid #bbb; border-radius: 3px; background: #fff; }
.full svg { width: 12px; height: 12px; }
.credit { position: absolute; right: 0; bottom: 0; padding: 0 4px; background: rgba(255, 255, 255, .7); color: #333; font: 8px/11px "Liberation Sans", sans-serif; white-space: nowrap; }
.credit a { color: #0078a8; }
</style>
